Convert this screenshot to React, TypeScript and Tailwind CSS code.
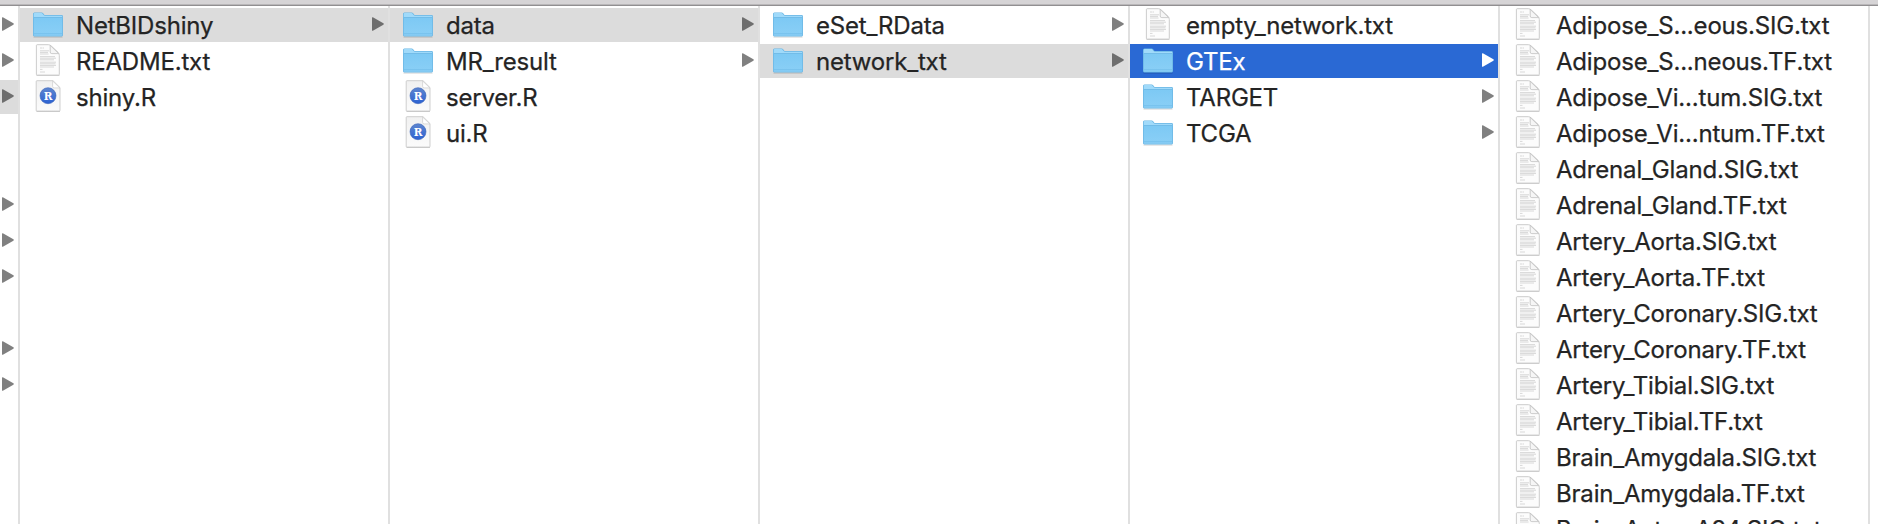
import { clsx } from "clsx";

type Kind = "folder" | "text" | "r";
type State = "none" | "path" | "active";
interface Item {
  name: string;
  kind: Kind;
  state?: State;
}

const columns: Item[][] = [
  [
    { name: "NetBIDshiny", kind: "folder", state: "path" },
    { name: "README.txt", kind: "text" },
    { name: "shiny.R", kind: "r" },
  ],
  [
    { name: "data", kind: "folder", state: "path" },
    { name: "MR_result", kind: "folder" },
    { name: "server.R", kind: "r" },
    { name: "ui.R", kind: "r" },
  ],
  [
    { name: "eSet_RData", kind: "folder" },
    { name: "network_txt", kind: "folder", state: "path" },
  ],
  [
    { name: "empty_network.txt", kind: "text" },
    { name: "GTEx", kind: "folder", state: "active" },
    { name: "TARGET", kind: "folder" },
    { name: "TCGA", kind: "folder" },
  ],
  [
    "Adipose_S...eous.SIG.txt",
    "Adipose_S...neous.TF.txt",
    "Adipose_Vi...tum.SIG.txt",
    "Adipose_Vi...ntum.TF.txt",
    "Adrenal_Gland.SIG.txt",
    "Adrenal_Gland.TF.txt",
    "Artery_Aorta.SIG.txt",
    "Artery_Aorta.TF.txt",
    "Artery_Coronary.SIG.txt",
    "Artery_Coronary.TF.txt",
    "Artery_Tibial.SIG.txt",
    "Artery_Tibial.TF.txt",
    "Brain_Amygdala.SIG.txt",
    "Brain_Amygdala.TF.txt",
    "Brain_Anter_A24.SIG.txt",
  ].map((name): Item => ({ name, kind: "text" })),
];

const parentRows: { arrow: boolean; state: State }[] = [
  { arrow: true, state: "none" },
  { arrow: true, state: "none" },
  { arrow: true, state: "path" },
  { arrow: false, state: "none" },
  { arrow: false, state: "none" },
  { arrow: true, state: "none" },
  { arrow: true, state: "none" },
  { arrow: true, state: "none" },
  { arrow: false, state: "none" },
  { arrow: true, state: "none" },
  { arrow: true, state: "none" },
];

function Arrow({ state = "none" }: { state?: State }) {
  return (
    <svg
      viewBox="0 0 12 14"
      className={clsx(
        "mr-1 mb-0.5 h-3.5 w-3 shrink-0",
        state === "active" ? "text-white" : state === "path" ? "text-[#6e6e6e]" : "text-[#808080]",
      )}
    >
      <path d="M0 .8Q0 0 .9.3L11.4 6.3Q12.2 7 11.4 7.7L.9 13.7Q0 14 0 13.2Z" fill="currentColor" />
    </svg>
  );
}

function FolderIcon() {
  return (
    <svg viewBox="0 0 32 27" className="h-[27px] w-8">
      <path d="M1.5 24.5H30.5V25.6H1.5Z" fill="#000" opacity=".16" />
      <path d="M1 2Q1 .4 2.4.4H9.6Q10.6.4 11.2 1.3L12 2.4Q12.6 3 13.4 3H29.6Q31 3 31 4.4V23Q31 24.4 29.8 24.4H2.2Q1 24.4 1 23Z" fill="#69b5e3" />
      <path d="M1.7 2.2Q1.7 1.1 2.7 1.1H9.4Q10.2 1.1 10.6 1.8L11.5 3Q12 3.7 13 3.7H29.4Q30.3 3.7 30.3 4.6V6H1.7Z" fill="#a0dafa" />
      <path d="M1.2 5H30.8V6H1.2Z" fill="#72bce8" />
      <path d="M1.7 5.9H30.3V22.9Q30.3 23.7 29.6 23.7H2.4Q1.7 23.7 1.7 22.9Z" fill="url(#folder-front)" />
      <path d="M2 21.7H30" stroke="#6ebae8" strokeWidth=".7" />
    </svg>
  );
}

function TextIcon() {
  return (
    <svg viewBox="0 0 26 33" className="h-[33px] w-[26px]">
      <path d="M1.5 31.4H24.5" stroke="#000" strokeWidth="1" opacity=".18" />
      <path d="M2.2.7H13.5Q15 .7 16.5 2.2L23 8.2Q24.3 9.5 24.3 11.5V30.3Q24.3 31.1 23.5 31.1H2.2Q1.4 31.1 1.4 30.3V1.5Q1.4.7 2.2.7Z" fill="#fcfcfc" stroke="#c6c6c6" strokeWidth=".9" />
      <path d="M15.2 1.4V8Q15.2 9.6 16.8 9.6H23.6Z" fill="#f6f6f6" stroke="#c0c0c0" strokeWidth=".8" />
      <g stroke="#b8b8b8" strokeWidth=".7" opacity=".75">
        <path d="M5 4H9" strokeDasharray="2 .5" />
        <path d="M5 6.8H14M5 8.4H13M5 10H13.5" />
        <path d="M5 12.6H20M5 14.2H21M5 15.8H19" />
        <path d="M5 18.2H21M5 19.8H20.5M5 21.4H21M5 23H19" />
        <path d="M5 25.4H7.5M5 28H10" />
      </g>
    </svg>
  );
}

function RIcon() {
  return (
    <svg viewBox="0 0 26 33" className="h-[33px] w-[26px]">
      <path d="M1.5 31.4H25" stroke="#000" strokeWidth="1" opacity=".2" />
      <path d="M2 .7H18L25 7.6V30.3Q25 31.1 24.2 31.1H2Q1.2 31.1 1.2 30.3V1.5Q1.2.7 2 .7Z" fill="url(#r-page)" stroke="#c3c3c3" strokeWidth=".8" />
      <path d="M17.6 1V6.3Q17.6 7.9 19.2 7.9H24.8Z" fill="#fff" stroke="#cdcdcd" strokeWidth=".7" />
      <circle cx="13" cy="15.7" r="8" fill="url(#r-disc)" stroke="#3c65b8" strokeWidth=".6" />
      <text x="13" y="19.6" textAnchor="middle" fill="#fff" className="font-['DejaVu_Serif',serif] text-[10.5px] font-bold">
        R
      </text>
    </svg>
  );
}

function FileIcon({ kind }: { kind: Kind }) {
  if (kind === "folder") return <FolderIcon />;
  return kind === "r" ? <RIcon /> : <TextIcon />;
}

function Row({ item }: { item: Item }) {
  const state = item.state ?? "none";
  return (
    <div
      className={clsx(
        "flex h-[34px] shrink-0 items-center",
        state === "path" && "bg-[#dcdcdc]",
        state === "active" && "bg-[#2a69d4]",
      )}
    >
      <div className={clsx("flex h-full w-14 shrink-0 items-start", item.kind === "folder" ? "pt-1 pl-3" : "pl-[15px]")}>
        <FileIcon kind={item.kind} />
      </div>
      <span
        className={clsx(
          "flex-1 pt-0.5 text-2xl leading-[34px] tracking-[-0.008em] whitespace-nowrap [-webkit-text-stroke:0.25px_currentColor]",
          state === "active" ? "text-white" : "text-[#242424]",
        )}
      >
        {item.name}
      </span>
      {item.kind === "folder" && <Arrow state={state} />}
    </div>
  );
}

export default function App() {
  return (
    <div className="flex h-[524px] w-[1878px] flex-col overflow-hidden bg-white font-['Inter',sans-serif]">
      <svg className="absolute size-0" aria-hidden="true">
        <defs>
          <linearGradient id="folder-front" x1="0" y1="0" x2="0" y2="1">
            <stop offset="0" stopColor="#7dc9f4" />
            <stop offset="1" stopColor="#8acff6" />
          </linearGradient>
          <linearGradient id="r-page" x1="0" y1="0" x2="0" y2="1">
            <stop offset="0" stopColor="#f1f1f1" />
            <stop offset="1" stopColor="#fbfbfb" />
          </linearGradient>
          <linearGradient id="r-disc" x1="0" y1="0" x2="0" y2="1">
            <stop offset="0" stopColor="#5e86cf" />
            <stop offset="1" stopColor="#2c62d2" />
          </linearGradient>
        </defs>
      </svg>
      <div className="h-[5px] shrink-0 border-b border-[#b9b7b9] bg-[#d6d4d6]" />
      <div className="h-px shrink-0 bg-[#918f91]" />
      <div className="flex min-h-0 flex-1">
        <div className="flex w-5 shrink-0 flex-col gap-0.5 border-r-2 border-[#e0e0e0] pt-0.5">
          {parentRows.map((row, i) => (
            <div key={i} className={clsx("flex h-[34px] items-center justify-end", row.state === "path" && "bg-[#dcdcdc]")}>
              {row.arrow && <Arrow state={row.state} />}
            </div>
          ))}
        </div>
        {columns.map((items, i) => (
          <div key={i} className="flex w-[370px] shrink-0 flex-col gap-0.5 overflow-hidden border-r-2 border-[#e0e0e0] pt-0.5">
            {items.map((item) => (
              <Row key={item.name} item={item} />
            ))}
          </div>
        ))}
      </div>
    </div>
  );
}
